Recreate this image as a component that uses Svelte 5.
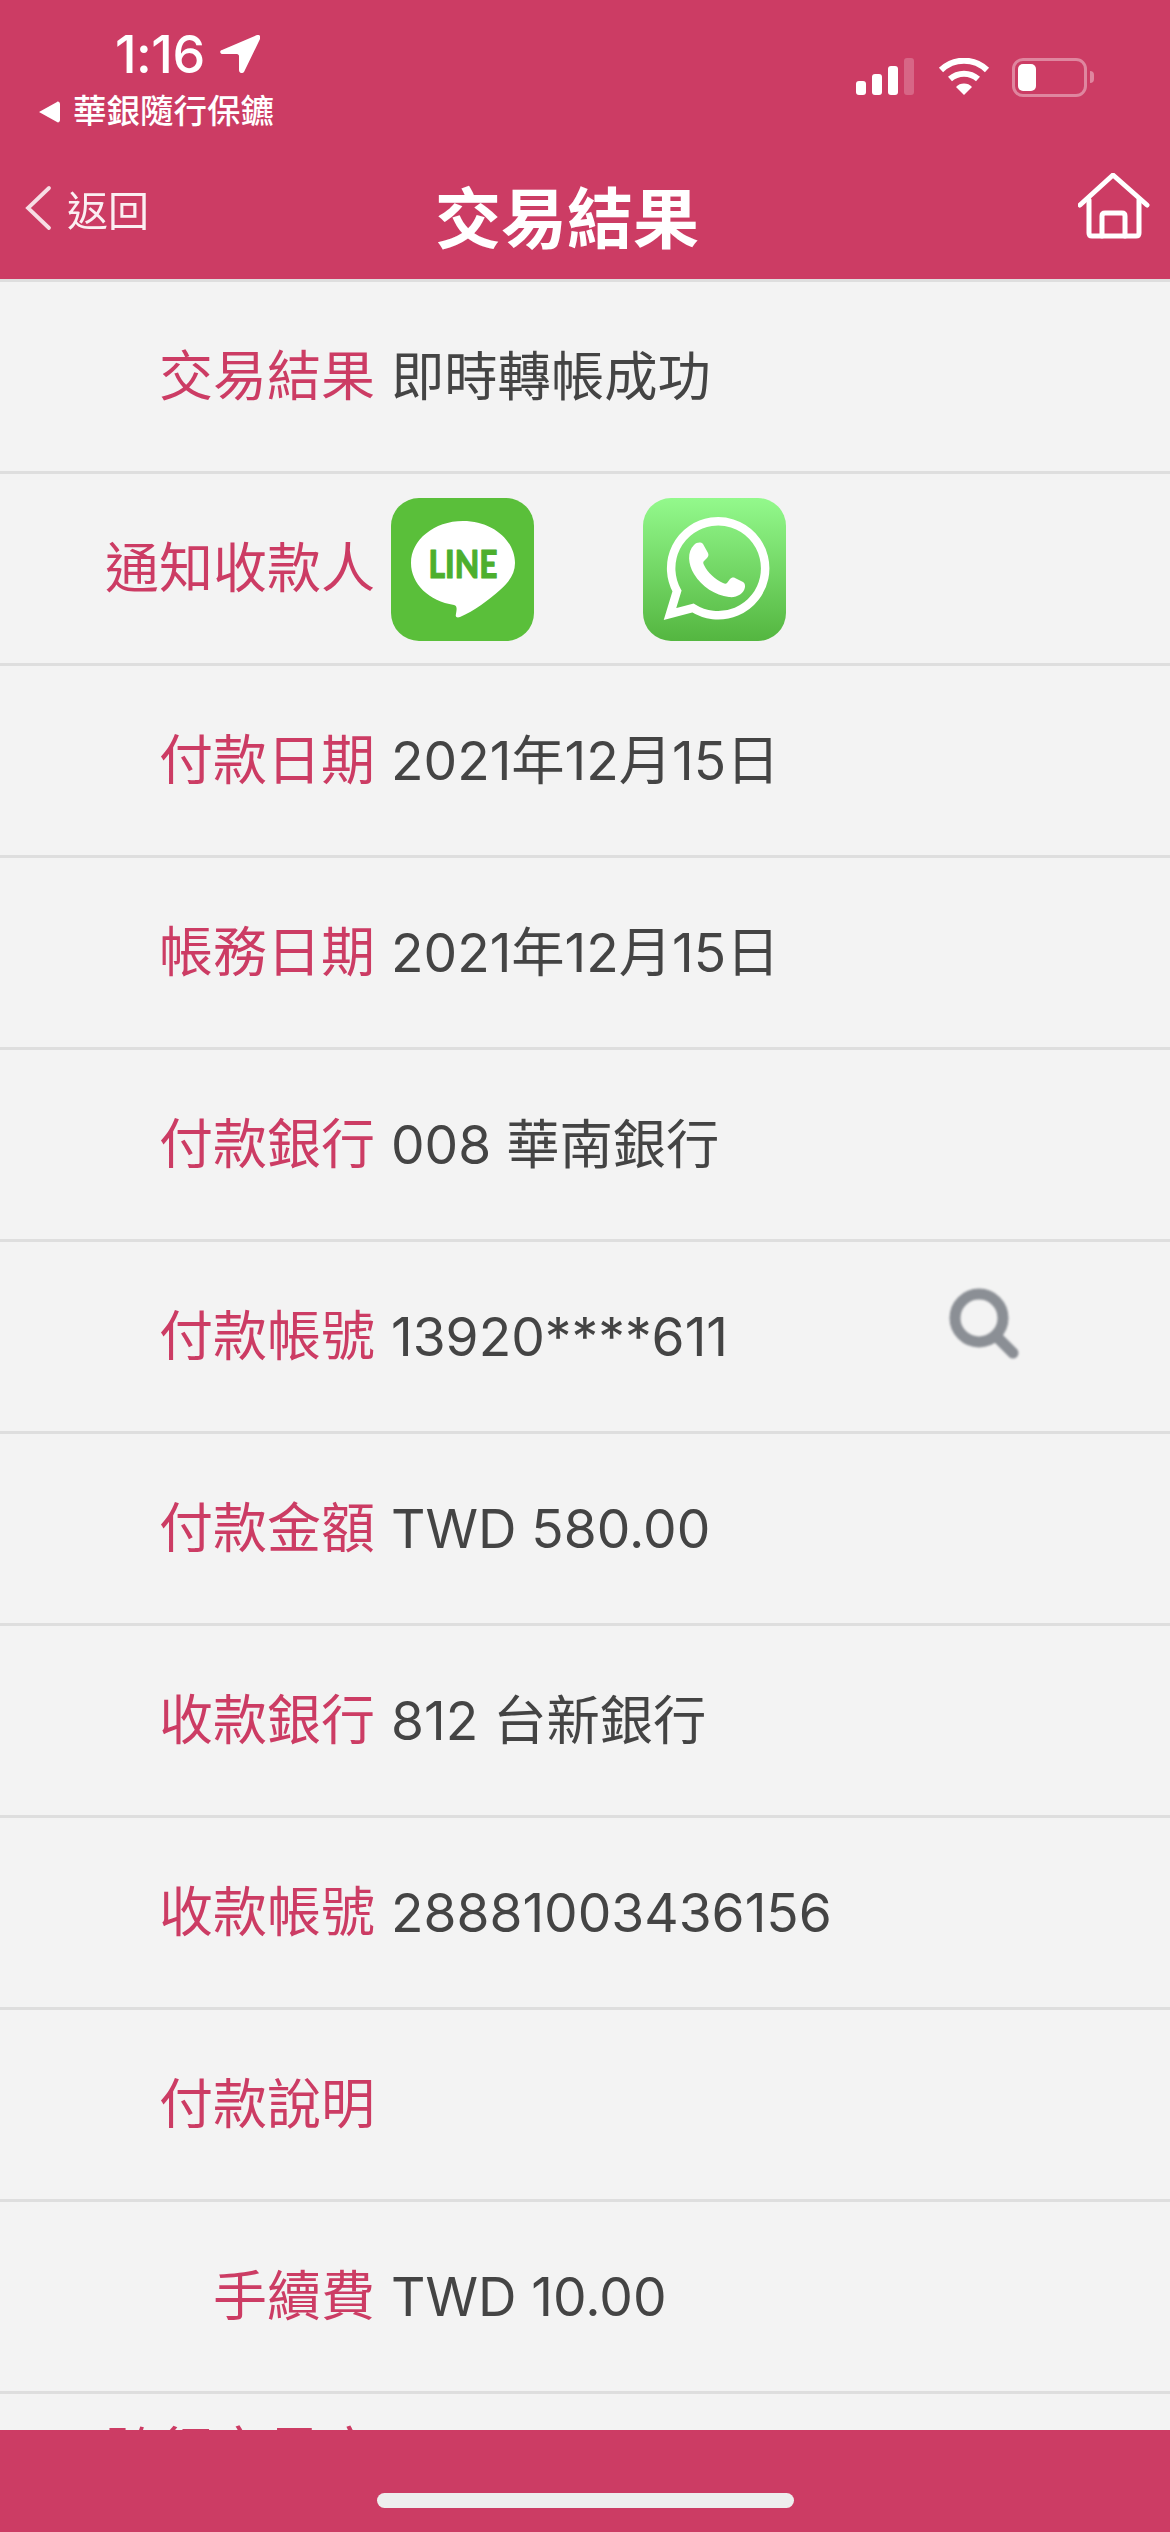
<script>
  const rows = [
    { label: '交易結果', value: '即時轉帳成功' },
    { label: '通知收款人', share: true },
    { label: '付款日期', value: '2021年12月15日' },
    { label: '帳務日期', value: '2021年12月15日' },
    { label: '付款銀行', value: '008 華南銀行' },
    { label: '付款帳號', value: '13920****611', search: true },
    { label: '付款金額', value: 'TWD 580.00' },
    { label: '收款銀行', value: '812 台新銀行' },
    { label: '收款帳號', value: '28881003436156' },
    { label: '付款說明', value: '' },
    { label: '手續費', value: 'TWD 10.00' },
    { label: '跨行交易序號', value: '' }
  ];
</script>

<div class="screen">
  <header class="top">
    <div class="status">
      <div class="status-left">
        <div class="clock">
          <span>1:16</span>
          <svg class="arrow" viewBox="0 0 40 38" aria-hidden="true">
            <path d="M37 0 2 15c-3 1-2 4 1 4h14c1 0 2 1 2 2v14c0 3 3 4 5 2L40 4c1-3-1-5-3-4z" fill="#fff"/>
          </svg>
        </div>
        <div class="back-app">
          <svg class="tri" viewBox="0 0 22 24" aria-hidden="true"><path d="M1 12 19 2c1-1 3 0 3 2v16c0 2-2 3-3 2z" fill="#fff"/></svg>
          <span>華銀隨行保鑣</span>
        </div>
      </div>
      <div class="status-right">
        <svg class="signal" viewBox="0 0 60 38" aria-hidden="true">
          <rect x="0" y="23" width="10" height="14" rx="3" fill="#fff"/>
          <rect x="16" y="16" width="10" height="21" rx="3" fill="#fff"/>
          <rect x="32" y="8" width="10" height="29" rx="3" fill="#fff"/>
          <rect x="48" y="0" width="10" height="37" rx="3" fill="#fff" opacity=".22"/>
        </svg>
        <svg class="wifi" viewBox="0 0 52 38" aria-hidden="true">
          <path d="M3 12a33 33 0 0 1 46 0" fill="none" stroke="#fff" stroke-width="6"/>
          <path d="M12 21a21 21 0 0 1 28 0" fill="none" stroke="#fff" stroke-width="6"/>
          <path d="M18 29a11 11 0 0 1 16 0l-8 8z" fill="#fff"/>
        </svg>
        <div class="battery"><div class="level"></div></div>
        <div class="nub"></div>
      </div>
    </div>
    <nav class="bar">
      <div class="back">
        <svg class="chevron" viewBox="0 0 28 46" aria-hidden="true">
          <path d="M25 3 4 23l21 20" fill="none" stroke="#fff" stroke-width="3.8" stroke-linecap="round" opacity=".9"/>
        </svg>
        <span>返回</span>
      </div>
      <h1>交易結果</h1>
      <svg class="home" viewBox="0 0 72 68" aria-hidden="true">
        <g fill="none" stroke="#fff" stroke-width="5" stroke-linecap="round" stroke-linejoin="round">
          <path d="M2 32 35 2l34 30"/>
          <path d="M11 27v33c0 2 1 3 3 3h44c2 0 3-1 3-3V27"/>
          <path d="M24 63V43c0-2 1-3 3-3h17c2 0 3 1 3 3v20"/>
        </g>
      </svg>
    </nav>
  </header>

  <main class="list">
    {#each rows as row}
      <div class="row">
        <div class="label">{row.label}</div>
        <div class="value">
          {#if row.share}
            <svg class="tile" viewBox="0 0 143 143" aria-label="LINE">
              <rect width="143" height="143" rx="28" fill="#5abf3a"/>
              <path d="M72 23c-29 0-52 19-52 42 0 21 18 38 43 42 3 1 3 3 2 9-1 3 1 4 4 3 14-6 29-17 40-27 10-9 15-17 15-27 0-23-23-42-52-42z" fill="#fff"/>
              <text x="72" y="80" textLength="69" lengthAdjust="spacingAndGlyphs" class="line-word">LINE</text>
            </svg>
            <svg class="tile second" viewBox="0 0 143 143" aria-label="WhatsApp">
              <defs>
                <linearGradient id="wa" x1="0" y1="0" x2="0" y2="1">
                  <stop offset="0" stop-color="#93f98c"/>
                  <stop offset="1" stop-color="#54b640"/>
                </linearGradient>
              </defs>
              <rect width="143" height="143" rx="28" fill="url(#wa)"/>
              <path d="M27 116 34 93A47 47 0 1 1 50 110Z" fill="none" stroke="#fff" stroke-width="8.5" stroke-linejoin="miter"/>
              <path d="M51 47c3-3 7-3 9-1l5 9c1 2 0 4-1 5l-3 3c-1 1-1 2 0 4 4 8 11 14 19 18 2 1 3 1 4 0l3-4c1-1 3-2 5-1l8 4c2 1 2 3 2 5-1 7-9 11-16 10-14-2-27-10-35-23-6-10-7-22 0-29z" fill="#fff"/>
            </svg>
          {:else}
            <span>{row.value}</span>
          {/if}
          {#if row.search}
            <svg class="search" viewBox="0 0 72 76" aria-hidden="true">
              <circle cx="31" cy="31" r="24" fill="none" stroke="#8b8f95" stroke-width="11"/>
              <path d="M49 50 65 66" fill="none" stroke="#8b8f95" stroke-width="11" stroke-linecap="round"/>
            </svg>
          {/if}
        </div>
      </div>
    {/each}
  </main>

  <footer class="foot"><div class="grabber"></div></footer>
</div>

<style>
  :global(body) {
    margin: 0;
    background: #f3f3f3;
  }

  .screen {
    width: 1170px;
    height: 2532px;
    display: flex;
    flex-direction: column;
    overflow: hidden;
    font-family: "Liberation Sans", "Noto Sans CJK TC", sans-serif;
    background: #f3f3f3;
  }

  .top {
    box-sizing: border-box;
    height: 282px;
    flex: none;
    background: #cc3c64;
    color: #fff;
    border-bottom: 3px solid #dedede;
    display: flex;
    flex-direction: column;
  }

  .status {
    height: 148px;
    display: flex;
    justify-content: space-between;
    padding: 0 0 0 38px;
  }

  .status-left {
    padding-top: 30px;
  }

  .clock {
    display: flex;
    align-items: center;
    gap: 15px;
    padding-left: 77px;
    height: 48px;
    font-family: Inter, sans-serif;
    font-size: 52px;
    font-weight: 500;
    letter-spacing: -0.5px;
  }

  .arrow {
    width: 40px;
    height: 38px;
  }

  .back-app {
    display: flex;
    align-items: center;
    gap: 13px;
    margin-top: 14px;
    font-size: 33.5px;
    font-weight: 500;
    line-height: 40px;
  }

  .tri {
    width: 22px;
    height: 24px;
  }

  .status-right {
    display: flex;
    align-items: flex-start;
    padding: 58px 80px 0 0;
  }

  .signal {
    width: 60px;
    height: 38px;
    margin-right: 22px;
  }

  .wifi {
    width: 52px;
    height: 38px;
    margin-right: 22px;
  }

  .battery {
    box-sizing: border-box;
    width: 75px;
    height: 39px;
    border: 3px solid rgba(255, 255, 255, 0.38);
    border-radius: 11px;
    padding: 3px;
  }

  .level {
    width: 18px;
    height: 27px;
    background: #fff;
    border-radius: 5px;
  }

  .nub {
    width: 4px;
    height: 12px;
    margin: 13px -4px 0 3px;
    background: rgba(255, 255, 255, 0.38);
    border-radius: 0 6px 6px 0;
  }

  .bar {
    flex: 1;
    position: relative;
    display: flex;
    align-items: center;
    justify-content: center;
  }

  h1 {
    margin: 0;
    font-size: 66px;
    font-weight: 700;
    line-height: 1;
    transform: translate(-18px, 6px);
  }

  .back {
    position: absolute;
    left: 24px;
    top: 30px;
    display: flex;
    align-items: center;
    gap: 15px;
    font-size: 41px;
    font-weight: 400;
    opacity: 0.92;
  }

  .chevron {
    width: 28px;
    height: 46px;
  }

  .home {
    position: absolute;
    left: 1078px;
    top: 25px;
    width: 72px;
    height: 68px;
  }

  .list {
    flex: 1;
    min-height: 0;
    overflow: hidden;
  }

  .row {
    box-sizing: border-box;
    min-height: 192px;
    display: flex;
    align-items: center;
    border-bottom: 3px solid #dedede;
  }

  .label {
    box-sizing: border-box;
    width: 375px;
    flex: none;
    padding-left: 100px;
    text-align: right;
    font-size: 54px;
    line-height: 72px;
    color: #cc3c64;
  }

  .value {
    position: relative;
    flex: 1;
    margin-left: 16px;
    display: flex;
    align-items: center;
    font-family: Inter, "Noto Sans CJK TC", sans-serif;
    font-size: 53.3px;
    line-height: 64px;
    color: #444444;
  }

  .tile {
    width: 143px;
    height: 143px;
    flex: none;
    position: relative;
    top: 1px;
  }

  .second {
    margin-left: 109px;
  }

  .line-word {
    font-family: Lato, sans-serif;
    font-weight: 900;
    font-size: 37px;
    fill: #4caf2e;
    stroke: #4caf2e;
    stroke-width: 1;
    stroke-linejoin: round;
    text-anchor: middle;
  }

  .search {
    position: absolute;
    left: 557px;
    top: -18px;
    width: 72px;
    height: 76px;
    filter: blur(1px);
  }

  .foot {
    position: relative;
    height: 102px;
    flex: none;
    background: #cc3c64;
  }

  .grabber {
    position: absolute;
    left: 377px;
    top: 63px;
    width: 417px;
    height: 15px;
    border-radius: 8px;
    background: #eeeeee;
  }
</style>
